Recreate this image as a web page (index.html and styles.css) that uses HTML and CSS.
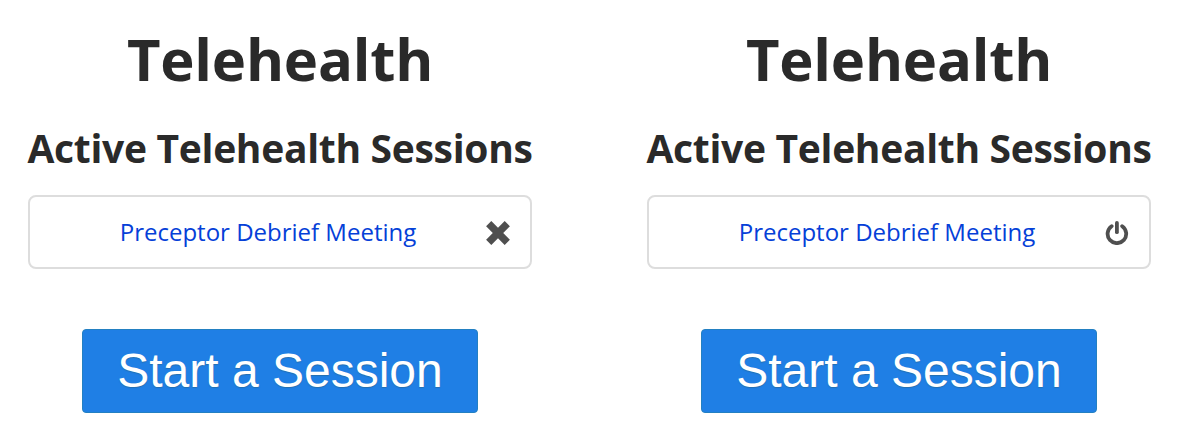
FILE: index.html
```html
<!DOCTYPE html>
<html lang="en">
<head>
    <meta charset="UTF-8">
    <meta name="viewport" content="width=device-width, initial-scale=1.0">
    <title>Telehealth</title>
    <link rel="stylesheet" href="styles.css">
</head>
<body>
    <div class="container">
        <div class="panel">
            <h1>Telehealth</h1>
            <h2>Active Telehealth Sessions</h2>
            <div class="session">
                <a class="session-link" href="#">Preceptor Debrief Meeting</a>
                <button class="icon-btn" aria-label="Close session">
                    <svg width="26" height="26" viewBox="0 0 26 26">
                        <path d="M6.3 2.1 L13 8.8 L19.7 2.1 L24.9 7.3 L18.2 14 L24.9 20.7 L19.7 25.9 L13 19.2 L6.3 25.9 L1.1 20.7 L7.8 14 L1.1 7.3 Z" fill="#4f4f4f"/>
                    </svg>
                </button>
            </div>
            <button class="start-btn">Start a Session</button>
        </div>

        <div class="panel">
            <h1>Telehealth</h1>
            <h2>Active Telehealth Sessions</h2>
            <div class="session">
                <a class="session-link" href="#">Preceptor Debrief Meeting</a>
                <button class="icon-btn" aria-label="End session">
                    <svg width="26" height="26" viewBox="0 0 26 26" fill="none" stroke="#4f4f4f" stroke-width="3.8" stroke-linecap="round">
                        <path d="M7.6 7.2 A9.3 9.3 0 1 0 18.2 7.2"/>
                        <path d="M12.9 3.9 V13.2"/>
                    </svg>
                </button>
            </div>
            <button class="start-btn">Start a Session</button>
        </div>
    </div>
</body>
</html>
```
FILE: styles.css
```css
body {
    font-family: 'Open Sans', sans-serif;
    margin: 0;
    background-color: #fff;
    color: #2a2a2a;
}

.container {
    display: flex;
    gap: 115px;
    padding: 19px 28px 0;
}

.panel {
    width: 504px;
    display: flex;
    flex-direction: column;
    align-items: center;
}

h1 {
    margin: 0;
    font-size: 58px;
    line-height: 80px;
    letter-spacing: -0.2px;
    font-weight: 700;
    white-space: nowrap;
}

h2 {
    margin: 22px 0 0;
    font-size: 39px;
    line-height: 54px;
    letter-spacing: -0.3px;
    font-weight: 700;
    white-space: nowrap;
}

.session {
    box-sizing: border-box;
    width: 504px;
    height: 74px;
    margin-top: 20px;
    padding: 0 19px 0 21px;
    border: 2px solid #ddd;
    border-radius: 8px;
    display: flex;
    align-items: center;
}

.session-link {
    flex: 1;
    padding-bottom: 2px;
    text-align: center;
    font-size: 24px;
    color: #0540d8;
    text-decoration: none;
    white-space: nowrap;
}

button {
    border: none;
    cursor: pointer;
}

.icon-btn {
    padding: 0;
    background: none;
    display: flex;
}

.start-btn {
    width: 396px;
    height: 84px;
    margin-top: 60px;
    padding: 0 0 2px;
    background-color: #1f7fe5;
    border: 1px solid #2380c2;
    border-radius: 4px;
    color: #fff;
    font-family: 'Liberation Sans', sans-serif;
    font-size: 48px;
    text-shadow: 0 1px 1px rgba(40, 100, 140, 0.6);
}
```
